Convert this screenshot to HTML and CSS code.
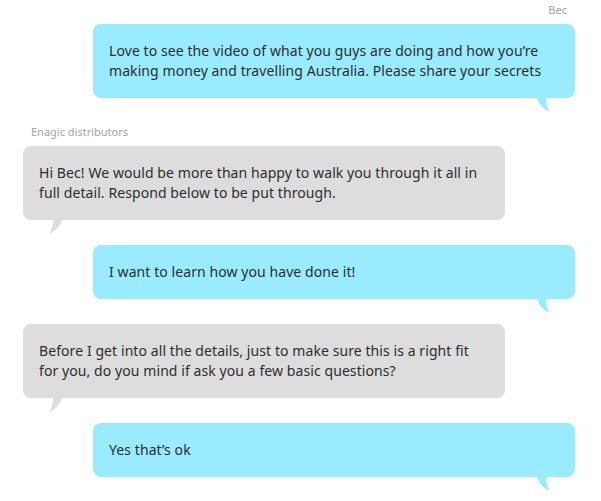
FILE: index.html
```html
<!DOCTYPE html>
<html lang="en">
<head>
<meta charset="utf-8">
<title>Chat</title>
<link rel="stylesheet" href="styles.css">
</head>
<body>
<div class="thread">
  <div class="sender sender-out">Bec</div>
  <div class="msg msg-out">
    <p class="msg-text">Love to see the video of what you guys are doing and how you’re making money and travelling Australia. Please share your secrets</p>
    <svg class="tail tail-out" width="14" height="14" viewBox="0 0 14 14"><path d="M0 0 C2 6 6 11 12.5 13.5 C10 9 9 5 9 0 Z"/></svg>
  </div>

  <div class="sender sender-in">Enagic distributors</div>
  <div class="msg msg-in">
    <p class="msg-text">Hi Bec! We would be more than happy to walk you through it all in full detail. Respond below to be put through.</p>
    <svg class="tail tail-in" width="14" height="14" viewBox="0 0 14 14"><path d="M14 0 C12 6 8 11 1.5 13.5 C4 9 5 5 5 0 Z"/></svg>
  </div>

  <div class="msg msg-out">
    <p class="msg-text">I want to learn how you have done it!</p>
    <svg class="tail tail-out" width="14" height="14" viewBox="0 0 14 14"><path d="M0 0 C2 6 6 11 12.5 13.5 C10 9 9 5 9 0 Z"/></svg>
  </div>

  <div class="msg msg-in">
    <p class="msg-text">Before I get into all the details, just to make sure this is a right fit for you, do you mind if ask you a few basic questions?</p>
    <svg class="tail tail-in" width="14" height="14" viewBox="0 0 14 14"><path d="M14 0 C12 6 8 11 1.5 13.5 C4 9 5 5 5 0 Z"/></svg>
  </div>

  <div class="msg msg-out">
    <p class="msg-text">Yes that’s ok</p>
    <svg class="tail tail-out" width="14" height="14" viewBox="0 0 14 14"><path d="M0 0 C2 6 6 11 12.5 13.5 C10 9 9 5 9 0 Z"/></svg>
  </div>
</div>
</body>
</html>
```
FILE: styles.css
```css
html, body {
  margin: 0;
  padding: 0;
  background: #ffffff;
}

body {
  width: 601px;
  height: 501px;
  overflow: hidden;
  font-family: "Noto Sans", "Open Sans", sans-serif;
  color: #2d2d2d;
}

.thread {
  display: flex;
  flex-direction: column;
  padding-top: 3px;
}

.sender {
  font-size: 11px;
  line-height: 14px;
  color: #a3a3a3;
  margin-bottom: 7px;
}

.sender-out {
  text-align: right;
  padding-right: 34px;
}

.sender-in {
  padding-left: 31px;
  margin-top: 2px;
}

.msg {
  position: relative;
  width: 482px;
  box-sizing: border-box;
  padding: 17px 20px 17px 16px;
  border-radius: 8px;
  margin-bottom: 25px;
}

.msg-out {
  margin-left: 93px;
  background: #99ebfd;
}

.msg-in {
  margin-left: 23px;
  background: #dddddd;
}

.msg-text {
  margin: 0;
  font-size: 14px;
  line-height: 20px;
  letter-spacing: 0.08px;
}

.tail {
  position: absolute;
  top: 100%;
  display: block;
}

.tail-out {
  right: 24px;
  fill: #99ebfd;
}

.tail-in {
  left: 25px;
  fill: #dddddd;
}
```
